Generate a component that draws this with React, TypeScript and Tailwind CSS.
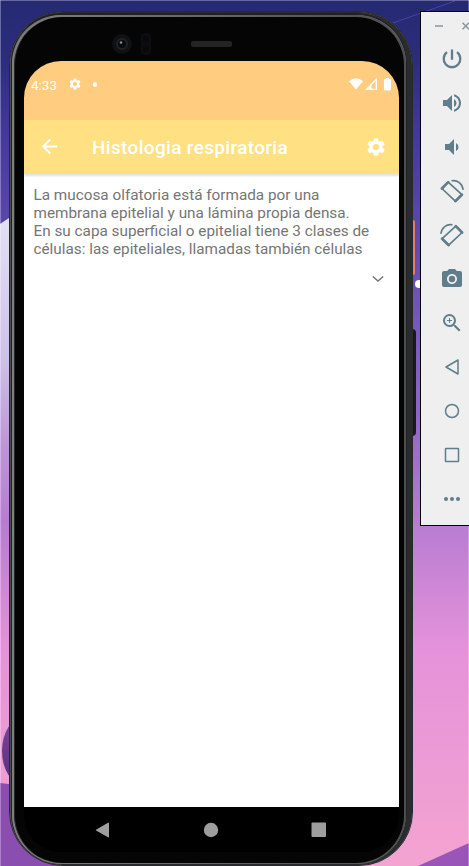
import React from "react";
import { MdArrowBack, MdPhotoCamera, MdSettings, MdVolumeDown, MdVolumeUp, MdZoomIn } from "react-icons/md";

function Wallpaper() {
  return (
    <svg className="absolute inset-0 h-full w-full" viewBox="0 0 469 866" preserveAspectRatio="none">
      <defs>
        <linearGradient id="sky" x1="0" y1="0" x2="0" y2="866" gradientUnits="userSpaceOnUse">
          <stop offset="0" stopColor="#252a72" />
          <stop offset="0.07" stopColor="#2c2d7c" />
          <stop offset="0.15" stopColor="#42389a" />
          <stop offset="0.32" stopColor="#6a50b4" />
          <stop offset="0.48" stopColor="#8f66c8" />
          <stop offset="0.61" stopColor="#b97dd2" />
          <stop offset="0.75" stopColor="#e592da" />
          <stop offset="1" stopColor="#f4a4d0" />
        </linearGradient>
        <linearGradient id="mist" x1="0" y1="220" x2="0" y2="520" gradientUnits="userSpaceOnUse">
          <stop offset="0" stopColor="#e3e0f4" />
          <stop offset="0.45" stopColor="#cfc2ea" />
          <stop offset="0.75" stopColor="#bd96d8" />
          <stop offset="1" stopColor="#b97dd2" />
        </linearGradient>
        <linearGradient id="planet" x1="0" y1="0" x2="0" y2="1">
          <stop offset="0" stopColor="#7d4799" />
          <stop offset="1" stopColor="#54307c" />
        </linearGradient>
      </defs>
      <rect width="469" height="866" fill="url(#sky)" />
      <path d="M0 224L12 216V520H0z" fill="url(#mist)" />
      <path d="M390 24L455 1" stroke="#4a3fa8" strokeWidth="1" />
      <ellipse cx="24" cy="751" rx="22" ry="34" fill="url(#planet)" />
      <path d="M0 783L60 790V866H0z" fill="#8a4db0" />
      <path d="M418 866L469 843V866z" fill="#9a55b8" />
      <rect x="411" y="220" width="4" height="55" rx="2" fill="#e87b6e" />
      <circle cx="419" cy="284" r="4" fill="#fff" />
      <path d="M0 .5H469M.5 0V866M468.500 0V866" stroke="#fff" strokeOpacity=".3" />
    </svg>
  );
}

function RotateIcon({ flip = false }: { flip?: boolean }) {
  return (
    <svg viewBox="0 0 24 24" className={flip ? "size-6 -scale-x-100" : "size-6"} fill="none" stroke="#607d8b">
      <path d="M8.200 3.200L1.900 9.500 15.300 22.200 21.900 15.700z" strokeWidth="1.700" strokeLinejoin="round" />
      <path d="M8.200 3.200L1.900 9.500M15.300 22.200L21.900 15.700" strokeWidth="2.600" strokeLinecap="round" />
      <path d="M11.500 1.800C17.500 .6 22.400 4.600 23.200 10.800" strokeWidth="1.600" />
    </svg>
  );
}

function Outline({ children }: { children: React.ReactNode }) {
  return (
    <svg viewBox="0 0 24 24" className="size-6" fill="none" stroke="#607d8b" strokeWidth="1.5" strokeLinejoin="round">
      {children}
    </svg>
  );
}

function Toolbar() {
  const tools = [
    <svg viewBox="0 0 24 24" className="size-6" fill="none" stroke="#607d8b" strokeWidth="2.3">
      <path d="M12 2.500V12.800M17 5.200A8.300 8.300 0 1 1 7 5.200" />
    </svg>,
    <MdVolumeUp className="size-6" />,
    <MdVolumeDown className="size-6" />,
    <RotateIcon />,
    <RotateIcon flip />,
    <MdPhotoCamera className="size-6" />,
    <MdZoomIn className="size-6" />,
    <Outline><path d="M18 5V19L6 12z" /></Outline>,
    <Outline><circle cx="12" cy="12" r="6.5" /></Outline>,
    <Outline><rect x="5.5" y="5.5" width="13" height="13" rx=".5" /></Outline>,
    <svg viewBox="0 0 24 24" className="size-6" fill="#607d8b">
      <circle cx="6" cy="12" r="2" /><circle cx="12" cy="12" r="2" /><circle cx="18" cy="12" r="2" />
    </svg>,
  ];
  return (
    <aside className="absolute top-[11px] left-[420px] h-[515px] w-[64px] border border-black bg-[#efefef] text-[#607d8b]">
      <div className="flex h-[25px] items-center pt-[3px] pl-[14px]">
        <svg viewBox="0 0 40 10" className="h-[10px] w-10" fill="none" stroke="#8798a1" strokeWidth="1.5">
          <path d="M0 5H8M27.500 1.800L34 8.300M34 1.800L27.500 8.300" />
        </svg>
      </div>
      {tools.map((tool, i) => (
        <div key={i} className="flex h-11 w-[62px] items-center justify-center">{tool}</div>
      ))}
    </aside>
  );
}

function Screen() {
  return (
    <main className="flex h-[791px] w-[375px] flex-col overflow-hidden rounded-[37px] bg-black">
      <div className="flex h-[59px] shrink-0 items-start bg-[#ffcc80] pt-[16px] pr-[7px] pl-[7px] text-white">
        <span className="w-[36.500px] text-[13.500px] leading-4">4:33</span>
        <MdSettings className="size-[14px]" />
        <span className="mt-[5px] ml-[11px] size-[4.500px] rounded-full bg-white" />
        <svg viewBox="0 0 43 14" className="ml-auto h-[14px] w-[43px]" fill="#fff">
          <path d="M0 4.200Q7 -1.500 14 4.200L7 12.500z" />
          <path d="M28 .8V13H16zM26.700 4L22.500 8.300V11.800H26.700z" fillRule="evenodd" />
          <rect x="35" y="2" width="7" height="11.500" rx="1" /><rect x="37" y="1" width="3" height="2" />
        </svg>
      </div>
      <header className="z-10 flex h-[54px] shrink-0 items-center bg-[#ffe082] px-[14px] text-white shadow-[0_2px_2px_rgba(0,0,0,.12)]">
        <MdArrowBack className="-mt-[2px] size-[23px]" />
        <h1 className="mt-[2px] ml-[31px] text-[19px] font-medium tracking-[0.330px]">Histologia respiratoria</h1>
        <MdSettings className="-mr-[2px] ml-auto size-[22px]" />
      </header>
      <section className="flex h-[633px] shrink-0 flex-col bg-white pt-[12px] pl-[9.500px] text-[15.300px] leading-[18px] whitespace-nowrap text-[#757575]">
        <p>La mucosa olfatoria está formada por una</p>
        <p>membrana epitelial y una lámina propia densa.</p>
        <p>En su capa superficial o epitelial tiene 3 clases de</p>
        <p>células: las epiteliales, llamadas también células</p>
        <svg viewBox="0 0 12 8" className="mt-[17px] mr-[15px] h-2 w-3 self-end" fill="none" stroke="#757575" strokeWidth="1.500">
          <path d="M.8 1.500L6 6 11.200 1.500" />
        </svg>
      </section>
      <nav className="grow">
        <svg viewBox="0 0 375 45" className="h-[45px] w-[375px]" fill="#9e9e9e">
          <path d="M72 22.800L84 15.800Q85 15.300 85 16.300V29.800Q85 31 84 30.300L72 23.600Q71.400 23.200 72 22.800z" />
          <circle cx="187" cy="23" r="7.200" />
          <rect x="287.500" y="15.500" width="14.500" height="14.500" rx="1" />
        </svg>
      </nav>
    </main>
  );
}

function Phone() {
  return (
    <div className="absolute top-[11px] left-[9px]">
      <span className="absolute top-[318px] left-[402px] h-[107px] w-[5px] rounded-r bg-[#19191b]" />
      <div className="relative h-[855px] w-[404px] overflow-hidden rounded-[54px] border border-[#28292c] bg-[#68696b]">
        <div className="h-full rounded-[53px] border-t border-r-[5px] border-b border-l border-[#2a2b2d] border-l-[#4c4d4f] bg-[#4b4c4e]">
          <div className="h-full rounded-[50px] border-t-2 border-r border-l border-[#202124] bg-[#696b6d]">
            <div className="h-full rounded-[50px] bg-linear-to-r from-[#7c7e80] to-[#4b4d4f] pt-[2px] pr-[2px] pb-[1px] pl-[2px]">
              <div className="h-full rounded-[48px] border-l border-[#28292b] bg-[#050506] pl-[9px]">
                <div className="flex h-[44px] pt-[16px] pl-[86px]">
                  <svg viewBox="0 0 130 24" className="h-6 w-[130px]">
                    <circle cx="12" cy="11" r="10" fill="#101113" />
                    <circle cx="12" cy="11" r="6" fill="#202225" />
                    <circle cx="12" cy="11" r="4" fill="#090a0e" />
                    <circle cx="11" cy="9.500" r="1.300" fill="#868b91" />
                    <rect x="31" y="0" width="10" height="22" rx="4" fill="#0c0d0f" />
                    <circle cx="36" cy="6" r="3" fill="#08090a" /><circle cx="36" cy="16" r="3" fill="#08090a" />
                    <rect x="81" y="8" width="41" height="6" rx="2" fill="#242425" />
                  </svg>
                </div>
                <Screen />
              </div>
            </div>
          </div>
        </div>
      </div>
    </div>
  );
}

export default function App() {
  return (
    <div className="relative h-[866px] w-[469px] overflow-hidden font-[Roboto,sans-serif]">
      <Wallpaper />
      <Phone />
      <Toolbar />
    </div>
  );
}
